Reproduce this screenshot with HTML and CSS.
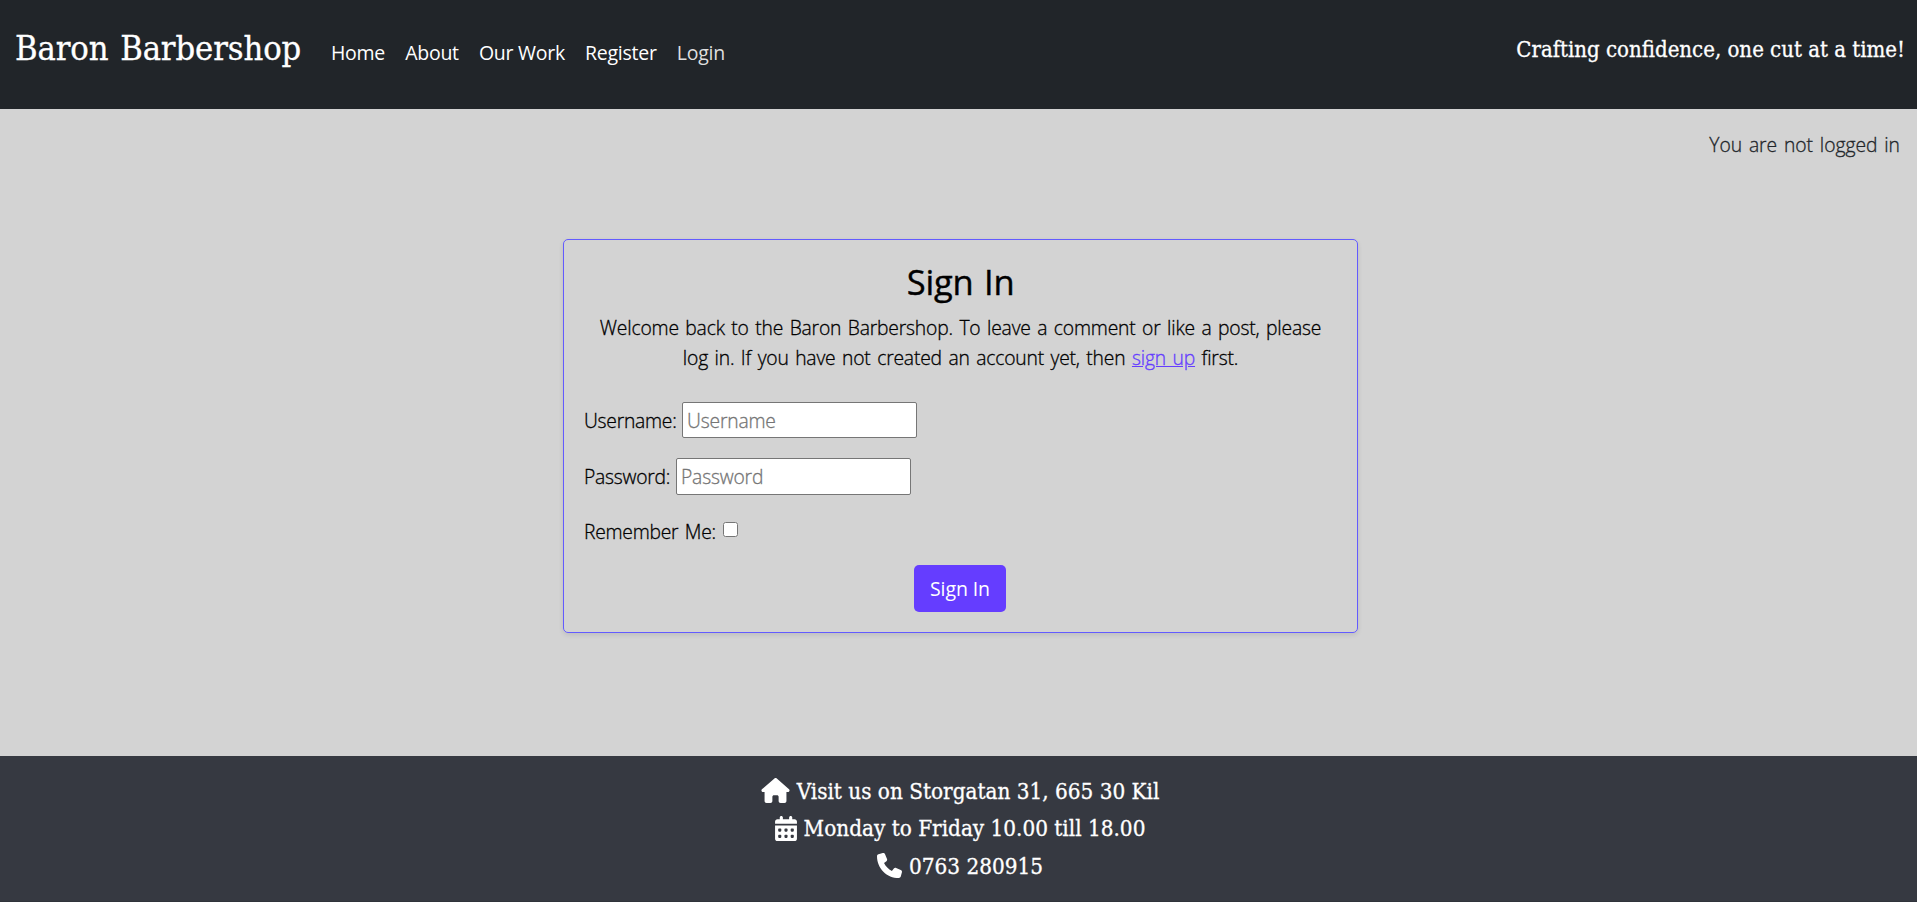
FILE: index.html
```html
<!DOCTYPE html>
<html lang="en">
<head>
<meta charset="utf-8">
<title>Baron Barbershop</title>
<link rel="stylesheet" href="styles.css">
</head>
<body>
<header class="header">
  <a class="brand" href="#">Baron Barbershop</a>
  <nav class="nav">
    <a href="#">Home</a>
    <a href="#">About</a>
    <a href="#">Our Work</a>
    <a href="#">Register</a>
    <a class="muted" href="#">Login</a>
  </nav>
  <p class="tagline">Crafting confidence, one cut at a time!</p>
</header>
<p class="status">You are not logged in</p>
<main class="main">
  <section class="card">
    <h1 class="title">Sign In</h1>
    <p class="intro">Welcome back to the Baron Barbershop. To leave a comment or like a post, please<br>log in. If you have not created an account yet, then <a href="#">sign up</a> first.</p>
    <form class="form">
      <div class="row"><label class="label-user" for="user">Username:</label><input class="field" id="user" type="text" placeholder="Username"></div>
      <div class="row row-pass"><label class="label-pass" for="pass">Password:</label><input class="field" id="pass" type="password" placeholder="Password"></div>
      <div class="row"><label class="label-remember" for="remember">Remember Me:</label><input class="check" id="remember" type="checkbox"></div>
      <button class="button" type="button">Sign In</button>
    </form>
  </section>
</main>
<footer class="footer">
  <p class="line"><svg class="icon-house" viewBox="0 0 576 512"><path d="M575.8 255.5c0 18-15 32.1-32 32.1h-32l.7 160.2c0 2.7-.2 5.400-.5 8.100V472c0 22.100-17.900 40-40 40H456c-1.100 0-2.200 0-3.300-.1c-1.400 .1-2.800 .1-4.200 .1H416 392c-22.100 0-40-17.900-40-40V448 384c0-17.700-14.300-32-32-32H256c-17.700 0-32 14.300-32 32v64 24c0 22.100-17.900 40-40 40H160 128.100c-1.500 0-3-.1-4.500-.2c-1.200 .1-2.400 .2-3.600 .2H104c-22.100 0-40-17.900-40-40V360c0-.9 0-1.900 .1-2.800V287.600H32c-18 0-32-14-32-32.100c0-9 3-17 10-24L266.400 8c7-7 15-8 22-8s15 2 21 7L564.800 231.500c8 7 12 15 11 24z"/></svg>Visit us on Storgatan 31, 665 30 Kil</p>
  <p class="line"><svg class="icon-calendar" viewBox="0 0 448 512"><path d="M128 0c17.700 0 32 14.300 32 32V64H288V32c0-17.700 14.300-32 32-32s32 14.300 32 32V64h48c26.500 0 48 21.500 48 48v48H0V112C0 85.500 21.500 64 48 64H96V32c0-17.700 14.300-32 32-32zM0 192H448V464c0 26.500-21.500 48-48 48H48c-26.500 0-48-21.500-48-48V192zm64 80v32c0 8.800 7.200 16 16 16h32c8.800 0 16-7.200 16-16V272c0-8.800-7.200-16-16-16H80c-8.800 0-16 7.200-16 16zm128 0v32c0 8.800 7.200 16 16 16h32c8.800 0 16-7.200 16-16V272c0-8.800-7.200-16-16-16H208c-8.800 0-16 7.200-16 16zm144-16c-8.800 0-16 7.200-16 16v32c0 8.800 7.200 16 16 16h32c8.800 0 16-7.200 16-16V272c0-8.800-7.200-16-16-16H336zM64 400v32c0 8.800 7.200 16 16 16h32c8.800 0 16-7.200 16-16V400c0-8.800-7.200-16-16-16H80c-8.800 0-16 7.200-16 16zm144-16c-8.800 0-16 7.200-16 16v32c0 8.800 7.200 16 16 16h32c8.800 0 16-7.200 16-16V400c0-8.800-7.200-16-16-16H208zm112 16v32c0 8.800 7.200 16 16 16h32c8.800 0 16-7.200 16-16V400c0-8.800-7.200-16-16-16H336c-8.800 0-16 7.200-16 16z"/></svg>Monday to Friday 10.00 till 18.00</p>
  <p class="line"><svg class="icon-phone" viewBox="0 0 512 512"><path d="M164.900 24.600c-7.700-18.600-28-28.500-47.400-23.200l-88 24C12.100 30.200 0 46 0 64C0 311.400 200.600 512 448 512c18 0 33.800-12.100 38.600-29.500l24-88c5.300-19.400-4.600-39.700-23.200-47.400l-96-40c-16.300-6.800-35.200-2.100-46.300 11.600L304.700 368C234.300 334.700 177.300 277.700 144 207.300L193.300 167c13.700-11.200 18.400-30 11.600-46.300l-40-96z"/></svg>0763 280915</p>
</footer>
</body>
</html>
```
FILE: styles.css
```css
* { box-sizing: border-box; }
body {
  margin: 0;
  height: 902px;
  display: flex;
  flex-direction: column;
  overflow: hidden;
  background: #d3d3d3;
  color: #000;
  font: 300 19.3px/30px "Open Sans", "Noto Sans", sans-serif;
  letter-spacing: -0.18px;
  word-spacing: 1.7px;
}
p, h1 { margin: 0; }
.header {
  height: 109px;
  flex: none;
  display: flex;
  align-items: flex-start;
  background: #212529;
  color: #fff;
}
.brand, .tagline, .footer {
  font-family: "DejaVu Serif Condensed", "DejaVu Serif", serif;
  font-weight: 400;
  letter-spacing: 0;
  word-spacing: 0;
  -webkit-text-stroke: 0.3px #fff;
}
.brand {
  width: 317px;
  padding: 20px 0 0 15px;
  font-size: 34.2px;
  line-height: 56px;
  letter-spacing: -0.1px;
  word-spacing: 2px;
  color: #fff;
  text-decoration: none;
  white-space: nowrap;
}
.nav {
  display: flex;
  gap: 20.2px;
  padding-top: 38px;
  margin-left: 14px;
  font-size: 19.5px;
  font-weight: 400;
  letter-spacing: -0.27px;
  word-spacing: 0;
}
.nav a { color: #fff; text-decoration: none; }
.nav .muted { color: #dedfdf; }
.tagline {
  margin-left: auto;
  padding: 35px 12px 0 0;
  font-size: 22px;
}
.status {
  padding: 21px 17px 0 0;
  text-align: right;
  letter-spacing: 0;
  color: #212529;
}
.status, .intro, .row { -webkit-text-stroke: 0.3px currentColor; }
.main {
  display: flex;
  justify-content: center;
  padding: 79px 0 0 4px;
}
.card {
  width: 795px;
  height: 394px;
  padding: 23px 20px 20px;
  border: 1px solid #635bff;
  border-radius: 5px;
  box-shadow: 0 2px 5px rgba(0, 0, 0, 0.1);
}
.title {
  text-align: center;
  font-size: 34.5px;
  font-weight: 500;
  line-height: 38px;
  -webkit-text-stroke: 0.4px currentColor;
}
.intro { margin-top: 12px; text-align: center; }
.intro a { color: #653dff; }
.form { display: flex; flex-direction: column; padding-top: 29px; }
.row { display: flex; align-items: center; height: 36px; }
.row label { letter-spacing: -0.25px; }
.row label { padding-top: 1px; }
.row-pass { margin: 20px 0 18px; height: 37px; }
.label-user { width: 98px; }
.label-pass { width: 92px; }
.label-remember { width: 139px; }
.field {
  width: 235px;
  height: 100%;
  padding: 1px 4px;
  border: 1px solid #767676;
  border-radius: 2px;
  background: #fff;
  font: inherit;
  letter-spacing: inherit;
}
.field::placeholder { color: #757575; }
.check { width: 15px; height: 15px; margin: 0 0 4px; }
.button {
  align-self: center;
  width: 92px;
  height: 47px;
  margin: 16px 1px 0 0;
  padding: 1px 0 0;
  border: 0;
  border-radius: 5px;
  background: #653dff;
  color: #fff;
  font: 400 19.5px/30px "Open Sans", "Noto Sans", sans-serif;
  letter-spacing: -0.1px;
}
.footer {
  margin-top: auto;
  height: 146px;
  padding: 16px 0 0 3px;
  background: #363941;
  border-bottom: 1px solid #30333b;
  color: #fff;
  font-size: 22.3px;
}
.line {
  display: flex;
  justify-content: center;
  align-items: center;
  gap: 7px;
  height: 37.5px;
}
.line svg { height: 25px; fill: #fff; }
.icon-house { width: 29px; }
.icon-calendar { width: 22px; }
.icon-phone { width: 25px; }
```
